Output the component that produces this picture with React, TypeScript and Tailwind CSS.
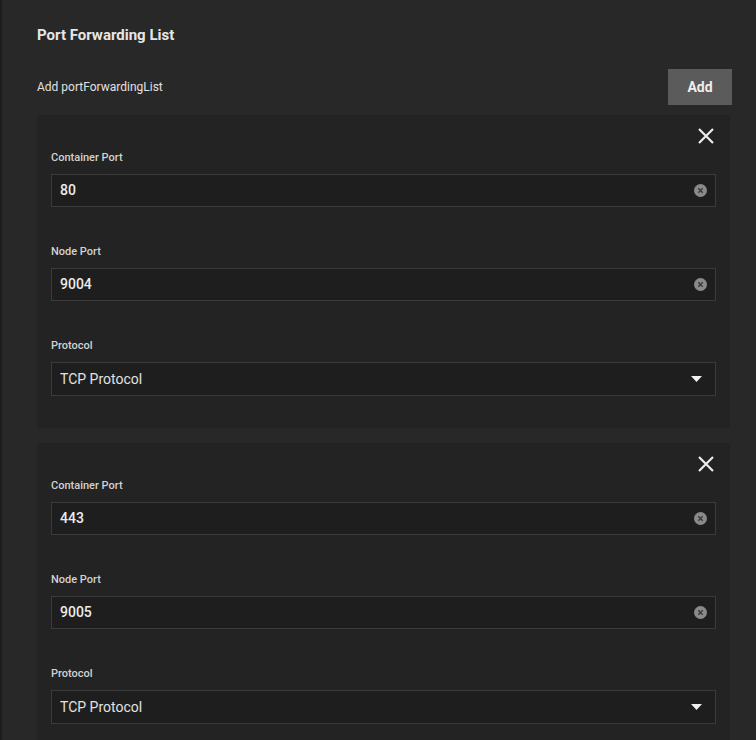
import React from 'react';

type Entry = { containerPort: string; nodePort: string; protocol: string };

const entries: Entry[] = [
  { containerPort: '80', nodePort: '9004', protocol: 'TCP Protocol' },
  { containerPort: '443', nodePort: '9005', protocol: 'TCP Protocol' },
];

const ClearIcon = () => (
  <svg width="13" height="13" viewBox="0 0 13 13">
    <circle cx="6.5" cy="6.5" r="6.5" fill="#8a8a8a" />
    <path d="M4.3 4.3 L8.7 8.7 M8.7 4.3 L4.3 8.7" stroke="#3a3a3a" strokeWidth="1.4" />
  </svg>
);

const CloseIcon = () => (
  <svg width="24" height="24" viewBox="0 0 24 24">
    <path d="M5 5 L19 19 M19 5 L5 19" stroke="#ececec" strokeWidth="2.2" />
  </svg>
);

const Caret = () => (
  <svg width="11" height="6" viewBox="0 0 11 6">
    <path d="M0 0 L11 0 L5.5 6 Z" fill="#f0f0f0" />
  </svg>
);

const Label = ({ text }: { text: string }) => (
  <div className="text-[11px] leading-[14px] font-medium text-[#d2d2d2]">{text}</div>
);

const TextField = ({ label, value }: { label: string; value: string }) => (
  <div>
    <Label text={label} />
    <div className="mt-[9px] h-[33px] flex items-center justify-between border border-[#3b3b3b] bg-[#1e1e1e] pl-[8px] pr-[8px]">
      <span className="text-[14px] font-medium text-[#ececec]">{value}</span>
      <ClearIcon />
    </div>
  </div>
);

const SelectField = ({ label, value }: { label: string; value: string }) => (
  <div>
    <Label text={label} />
    <div className="mt-[9px] h-[34px] flex items-center justify-between border border-[#3b3b3b] bg-[#1e1e1e] pl-[8px] pr-[13px]">
      <span className="text-[14px] text-[#e2e2e2]">{value}</span>
      <Caret />
    </div>
  </div>
);

const PortCard = ({ entry }: { entry: Entry }) => (
  <div className="bg-[#232323] px-[14px] pt-[9px] pb-[32px]">
    <div className="flex justify-end h-[24px] -mr-[2px]">
      <CloseIcon />
    </div>
    <div className="mt-[3px] flex flex-col gap-[38px]">
      <TextField label="Container Port" value={entry.containerPort} />
      <TextField label="Node Port" value={entry.nodePort} />
      <SelectField label="Protocol" value={entry.protocol} />
    </div>
  </div>
);

export default function App() {
  return (
    <div
      className="min-h-screen w-full bg-[#282828] border-l-2 border-[#1d1d1d] text-white"
      style={{ fontFamily: 'Roboto, "Liberation Sans", sans-serif' }}
    >
      <div className="pl-[35px] pr-[24px] pt-[26px]">
        <h2 className="text-[15px] leading-[18px] font-bold text-[#e6e6e6]">Port Forwarding List</h2>
        <div className="mt-[25px] flex items-center justify-between">
          <span className="text-[12px] text-[#e0e0e0]">Add portForwardingList</span>
          <button className="w-[64px] h-[36px] bg-[#5b5b5b] text-[14px] font-bold text-[#ededed]">Add</button>
        </div>
        <div className="mt-[10px] mr-[2px] flex flex-col gap-[15px]">
          {entries.map((e, i) => (
            <PortCard key={i} entry={e} />
          ))}
        </div>
      </div>
    </div>
  );
}
